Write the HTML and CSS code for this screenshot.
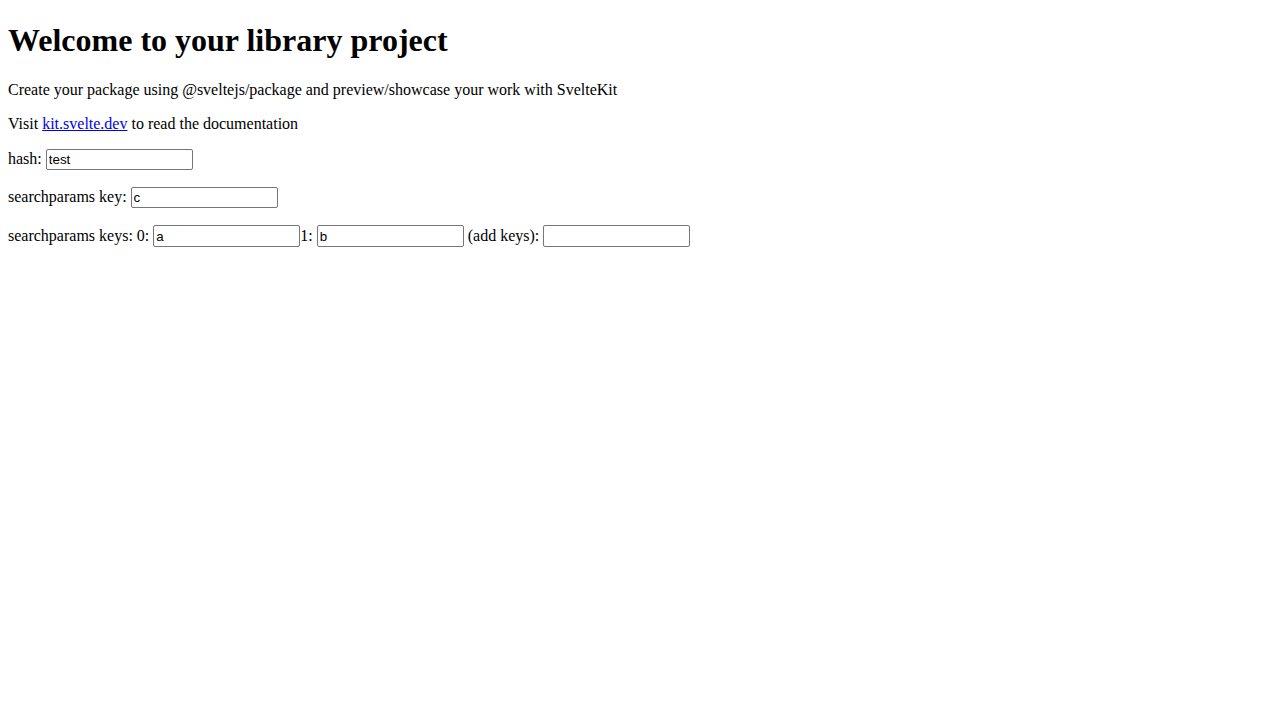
FILE: index.html
```html
<!DOCTYPE html>
<html lang="en">
<head>
<meta charset="utf-8">
<title>Library project</title>
<link rel="stylesheet" href="styles.css">
</head>
<body class="page">
<h1 class="title">Welcome to your library project</h1>
<p class="text">Create your package using @sveltejs/package and preview/showcase your work with SvelteKit</p>
<p class="text">Visit <a class="link" href="https://kit.svelte.dev">kit.svelte.dev</a> to read the documentation</p>
<p class="text text-row">hash: <input class="field" value="test"></p>
<p class="text text-row">searchparams key: <input class="field" value="c"></p>
<p class="text text-row">searchparams keys: <span class="item">0: <input class="field field-tall" value="a"></span><span class="item">1: <input class="field field-tall" value="b"></span> (add keys): <input class="field field-tall" value=""></p>
</body>
</html>
```
FILE: styles.css
```css
.page {
  margin: 8px;
  font-family: "Liberation Serif", "Times New Roman", serif;
  font-size: 16px;
  color: #000;
  background: #fff;
}
.title {
  font-size: 2em;
  font-weight: bold;
  margin: 14px 0 22.44px;
}
.text {
  margin: 1em 0;
}
.text-row {
  padding-bottom: 1px;
}
.link {
  color: #0000ee;
  text-decoration: underline;
}
.field {
  box-sizing: border-box;
  width: 147px;
  height: 21px;
  padding: 1px 2px;
  border: 1px solid #767676;
  border-radius: 2px;
  font-family: "Liberation Sans", Arial, sans-serif;
  font-size: 13.3333px;
}
.field-tall {
  height: 22px;
}
```
